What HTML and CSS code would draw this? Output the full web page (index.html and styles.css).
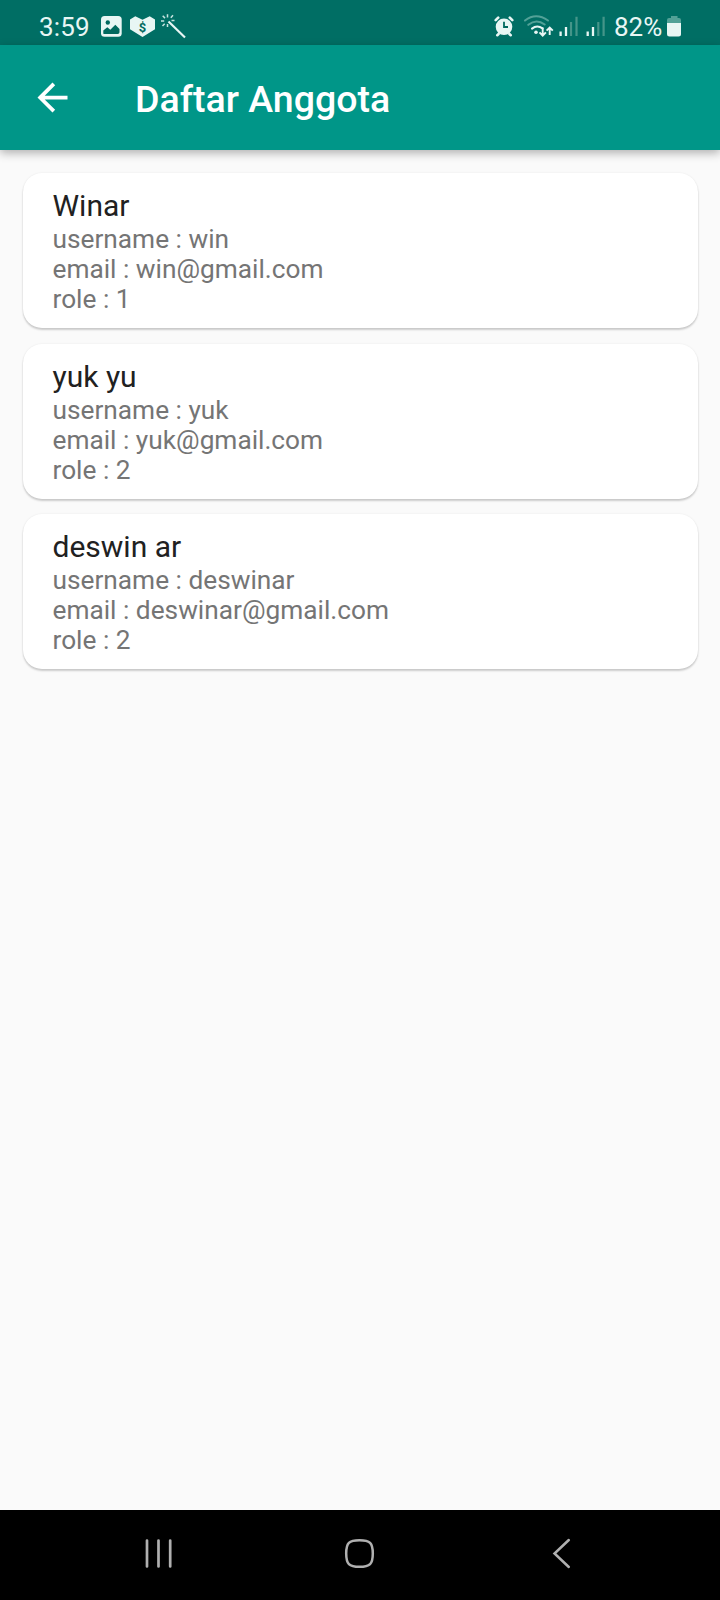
FILE: index.html
```
<!DOCTYPE html>
<html lang="id">
<head>
<meta charset="utf-8">
<title>Daftar Anggota</title>
<link rel="stylesheet" href="styles.css">
</head>
<body>
<div class="status">
  <span class="clock">3:59</span>
  <svg class="notifications" width="90" height="45" viewBox="98 0 90 45">
    <rect x="101" y="16" width="20.7" height="20.7" rx="3.5" fill="#e8f6f4"/>
    <circle cx="107.8" cy="22.5" r="2.2" fill="#00695f"/>
    <path d="M103.3 33.5v-3l4-3.3 3 2.5 5-5 4.2 4.3v3.3q0 1.8-1.8 1.8h-12.6q-1.8 0-1.8-.6z" fill="#00695f"/>
    <path d="M130 19.5l5.3-3.3 7.2 3.6 7.2-3.6 5.3 3.3v9.7L142.5 37 130 29.2z" fill="#e8f6f4"/>
    <text x="142.6" y="32" class="dollar">$</text>
    <path d="M168.5 21.5L185 37.5" stroke="#e8f6f4" stroke-width="2.2"/>
    <path d="M167.5 14.3v3.2M167.5 24v3M161 21h3.2M171.5 20.5h3M162.7 15.8l2.3 2.3M173 15.3l-2.2 2.5M164.7 23.8l-2.2 2.2" stroke="#c5e3df" stroke-width="1.5"/>
  </svg>
  <svg class="indicators" width="118" height="45" viewBox="492 0 118 45">
    <g stroke="#e8f6f4" fill="none" stroke-width="2.6" stroke-linecap="round">
      <path d="M495.7 20.2l2.5-2.5M512.3 20.2l-2.5-2.5M498.6 34l-1.3 1.2M509.4 34l1.3 1.2"/>
    </g>
    <circle cx="504" cy="26.8" r="8.3" fill="#e8f6f4"/>
    <path d="M504 21.8v5.2h4" fill="none" stroke="#00695f" stroke-width="1.8"/>
    <g fill="none" stroke-width="2.1" stroke-linecap="round">
      <path d="M525 20.5q11-8.500 23 0M528.3 24.8q8-6.500 16.4-.3" stroke="#52a197"/>
      <path d="M532 28.6q5-4 10.500-.3" stroke="#e8f6f4"/>
    </g>
    <circle cx="536" cy="32.3" r="1.8" fill="#e8f6f4"/>
    <path d="M542.7 27.5v8M539.5 32.4l3.2 3.3 3.2-3.3M549.7 35v-7.3M546.6 30.7l3.1-3.2 3.1 3.2" fill="none" stroke="#e8f6f4" stroke-width="1.9"/>
    <path d="M560.6 31.5v4.5M566 27v9M587.7 31.5v4.5M593 27v9" stroke="#e8f6f4" stroke-width="2.3"/>
    <path d="M571 22v14M576.5 16.7v19.3M598.3 22v14M603.6 16.7v19.3" stroke="#459589" stroke-width="2.2"/>
  </svg>
  <span class="percent">82%</span>
  <svg class="battery" width="16" height="45" viewBox="666 0 16 45">
    <path d="M667 23v-3q0-2 2-2h2v-2h6.500v2h1.500q2 0 2 2v3z" fill="#52a197"/>
    <path d="M667 23h14v11q0 2.500-2.500 2.500h-9q-2.500 0-2.500-2.500z" fill="#e8f6f4"/>
  </svg>
</div>
<header class="appbar">
  <svg class="back" width="45" height="45" viewBox="0 0 24 24"><path d="M20 11H7.830l5.590-5.590L12 4l-8 8 8 8 1.410-1.410L7.830 13H20v-2z" fill="#fff"/></svg>
  <h1 class="heading">Daftar Anggota</h1>
</header>
<main class="list">
  <article class="card">
    <h2 class="name">Winar</h2>
    <p class="line">username : win</p>
    <p class="line">email : win@gmail.com</p>
    <p class="line">role : 1</p>
  </article>
  <article class="card">
    <h2 class="name">yuk yu</h2>
    <p class="line">username : yuk</p>
    <p class="line">email : yuk@gmail.com</p>
    <p class="line">role : 2</p>
  </article>
  <article class="card">
    <h2 class="name">deswin ar</h2>
    <p class="line">username : deswinar</p>
    <p class="line">email : deswinar@gmail.com</p>
    <p class="line">role : 2</p>
  </article>
</main>
<nav class="navbar">
  <svg width="720" height="90" viewBox="0 1510 720 90" fill="none" stroke="#b0b0b0" stroke-linecap="round">
    <path d="M147 1540.500v26M158.500 1540.500v26M170.200 1540.500v26" stroke-width="2.700"/>
    <path d="M359.500 1540.200c10.500 0 13.300 2.800 13.300 13.300s-2.800 13.300-13.300 13.300-13.300-2.800-13.300-13.300 2.800-13.300 13.300-13.300z" stroke-width="2.500"/>
    <path d="M568.800 1540l-14.300 13.500 14.300 13.500" stroke-width="2.500"/>
  </svg>
</nav>
</body>
</html>
```
FILE: styles.css
```
* {
  box-sizing: border-box;
  margin: 0;
}
body {
  display: flex;
  flex-direction: column;
  width: 720px;
  height: 1600px;
  overflow: hidden;
  background: #fafafa;
  font-family: Roboto, sans-serif;
}
svg {
  display: block;
  flex: none;
}
.status {
  display: flex;
  flex: none;
  height: 45px;
  padding-left: 39px;
  background: #006e64;
  color: #e8f6f4;
  font-size: 26px;
  line-height: 54px;
}
.clock {
  width: 59px;
  letter-spacing: 0.2px;
}
.dollar {
  font-size: 13px;
  font-weight: 700;
  text-anchor: middle;
  fill: #00695f;
}
.indicators {
  margin-left: 304px;
}
.percent {
  width: 52px;
  margin-left: 4px;
}
.appbar {
  display: flex;
  flex: none;
  align-items: center;
  height: 105px;
  padding-left: 30px;
  background: #009688;
  box-shadow: 0 3px 9px rgba(0, 0, 0, 0.3);
  z-index: 1;
}
.heading {
  margin: 3px 0 0 60px;
  color: #fff;
  font-size: 37.5px;
  font-weight: 500;
  line-height: 44px;
}
.list {
  display: flex;
  flex: 1;
  flex-direction: column;
  gap: 15.6px;
  padding: 23px 22.5px 0;
}
.card {
  height: 155px;
  padding: 15px 30px 0;
  border-radius: 19px;
  background: #fff;
  box-shadow: 0 2px 2px rgba(0, 0, 0, 0.18), 0 0 2px rgba(0, 0, 0, 0.08);
}
.name {
  margin-bottom: 1px;
  color: #212121;
  font-size: 30px;
  font-weight: 400;
  line-height: 35px;
}
.line {
  color: #757575;
  font-size: 26.25px;
  line-height: 30px;
}
.navbar {
  flex: none;
  height: 90px;
  background: #000;
}
```
